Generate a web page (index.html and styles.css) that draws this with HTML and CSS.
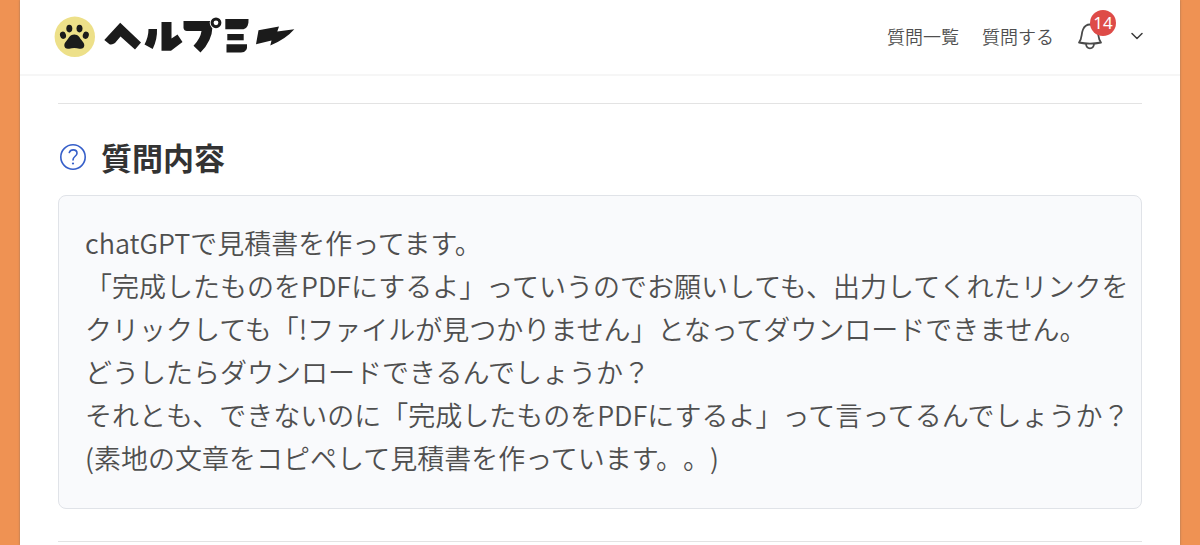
FILE: index.html
```html
<!DOCTYPE html>
<html lang="ja">
<head>
<meta charset="utf-8">
<meta name="viewport" content="width=device-width, initial-scale=1">
<title>ヘルプミー</title>
<link rel="stylesheet" href="styles.css">
</head>
<body>
<div class="page">
  <header class="header">
    <a class="logo" href="#" aria-label="ヘルプミー">
      <svg class="logo-art" viewBox="0 0 242 42" aria-hidden="true">
        <circle cx="20.8" cy="20.8" r="20.2" fill="#ede089"/>
        <g fill="#1b1b1b">
          <ellipse cx="15.3" cy="12.6" rx="3" ry="3.8"/>
          <ellipse cx="25.5" cy="12.6" rx="3" ry="3.8"/>
          <ellipse cx="9" cy="19.300" rx="3" ry="3.700" transform="rotate(-15 9 19.300)"/>
          <ellipse cx="31.8" cy="19.300" rx="3" ry="3.700" transform="rotate(15 31.8 19.300)"/>
          <path d="M20.300 18.500c4 0 5.200 3 7 5.300 1.500 2.200 3 3 3 5.500 0 3-2.500 4-5 3.400-3.200-.8-6.800-.8-10 0-2.500.6-5-.4-5-3.400 0-2.500 1.500-3.300 3-5.500C15.100 21.500 16.300 18.500 20.300 18.500z"/>
          <path d="M50.300 24 66.200 6.800 87 26.500 81 33.500 66.500 20.500 61 27Q58.500 29 55.500 28.300z"/>
          <path d="M94.500 13H103Q103.500 23 98.700 33L90.500 28.500Q94.500 21 94.500 13z"/>
          <path d="M107.500 6H117.500V22.500L123.500 18.500 128.500 26 117 34.800H107.500z"/>
          <path d="M129.500 5H158.500V11Q158 25 146.500 36.500L139.500 29.800Q146.500 22.500 147.500 15H133Q130 15 129.500 12z"/>
          <path d="M171.300 3H194.500Q195 12 189.500 13.300H171.300z"/>
          <path d="M173.300 18H189.700V24.300H173.300z"/>
          <path d="M172.500 28.200H193Q194 36.500 187 36.500H172.500z"/>
          <path d="M204.500 14.200 225 10.500 223.300 15.500 240.300 13.300Q232 23 216.300 29.500L217.500 24.500 202 28.300z"/>
        </g>
        <circle cx="162" cy="6.800" r="6.300" fill="#fff"/>
        <circle cx="162" cy="6.800" r="3.900" fill="none" stroke="#1b1b1b" stroke-width="3"/>
      </svg>
    </a>
    <nav class="nav">
      <a class="nav-link" href="#">質問一覧</a>
      <a class="nav-link" href="#">質問する</a>
      <button class="bell" type="button" aria-label="通知">
        <svg class="bell-icon" viewBox="0 0 26 28" aria-hidden="true">
          <path d="M2 20.500C5.500 16.500 4 12 6 7.500 7.500 4 10 2.500 13 2.500S18.500 4 20 7.500C22 12 20.500 16.500 24 20.500Q13 22.800 2 20.500zM9 22Q9.300 26.300 13 26.300T17 22" fill="none" stroke="#4a4a4a" stroke-width="1.800" stroke-linejoin="round"/>
        </svg>
        <span class="badge">14</span>
      </button>
      <button class="menu" type="button" aria-label="メニュー">
        <svg class="chevron" viewBox="0 0 12 8" aria-hidden="true"><path d="M1 1.500 6 6.500 11 1.500" fill="none" stroke="#3c3c3c" stroke-width="1.500" stroke-linecap="round" stroke-linejoin="round"/></svg>
      </button>
    </nav>
  </header>
  <main class="content">
    <section class="question">
      <h1 class="title">
        <svg class="help-icon" viewBox="0 0 28 28" aria-hidden="true">
          <circle cx="14" cy="14" r="12.200" fill="none" stroke="#365fc9" stroke-width="1.600"/>
          <path d="M10.300 9.500C11 7.600 12.400 6.900 14.200 6.900 16.500 6.900 18 8.300 18 10.200 18 13.200 14 13.400 14 17" fill="none" stroke="#365fc9" stroke-width="1.600" stroke-linecap="round"/>
          <circle cx="14" cy="20.500" r="1.100" fill="#365fc9"/>
        </svg>
        質問内容
      </h1>
      <p class="body">chatGPTで見積書を作ってます。<br>「完成したものをPDFにするよ」っていうのでお願いしても、出力してくれたリンクをクリックしても「!ファイルが見つかりません」となってダウンロードできません。<br>どうしたらダウンロードできるんでしょうか？<br>それとも、できないのに「完成したものをPDFにするよ」って言ってるんでしょうか？<br>(素地の文章をコピペして見積書を作っています。。)</p>
    </section>
  </main>
</div>
</body>
</html>
```

FILE: styles.css
```css
* { box-sizing: border-box; }

body {
  margin: 0;
  padding: 0 20px;
  background: #ef9253;
  color: #4f4f4f;
  font-family: "Noto Sans CJK JP", sans-serif;
  font-weight: 350;
  text-spacing-trim: space-all;
}

.page {
  min-height: 100vh;
  background: #fff;
  box-shadow: 0 0 2px rgba(90, 90, 90, 0.6);
}

.header {
  display: flex;
  align-items: center;
  justify-content: space-between;
  height: 76px;
  padding: 0 37px 0 34px;
  border-bottom: 2px solid #f6f6f6;
}

.logo-art {
  display: block;
  width: 242px;
  height: 42px;
}

.nav {
  display: flex;
  align-items: center;
  gap: 23px;
  padding-bottom: 2px;
}

.nav-link {
  color: #4f4f4f;
  font-size: 18px;
  line-height: 28px;
  text-decoration: none;
}

.bell,
.menu {
  padding: 0;
  border: 0;
  background: none;
  font-family: inherit;
}

.bell { position: relative; }

.bell-icon {
  display: block;
  width: 26px;
  height: 28px;
}

.badge {
  position: absolute;
  top: -12px;
  left: 13px;
  width: 26px;
  border-radius: 50%;
  background: #de4b48;
  color: #fff;
  font: 400 17px/26px "Noto Sans", sans-serif;
  text-align: center;
}

.menu { margin-left: 5px; }

.chevron {
  display: block;
  width: 12px;
  height: 8px;
}

.content {
  padding: 27px 38px 0;
}

.question {
  padding: 30px 0 32px;
  border: solid #e3e3e3;
  border-width: 1px 0;
}

.title {
  display: flex;
  align-items: center;
  gap: 14px;
  margin: 0 0 15px;
  padding-left: 1px;
  color: #333;
  font-size: 31px;
  font-weight: 700;
  line-height: 46px;
}

.help-icon {
  width: 28px;
  height: 28px;
}

.body {
  margin: 0;
  padding: 25px 8px 29px 26px;
  border: 1px solid #e0e3e8;
  border-radius: 8px;
  background: #f9fafc;
  font-size: 27px;
  line-height: 43px;
}
```
